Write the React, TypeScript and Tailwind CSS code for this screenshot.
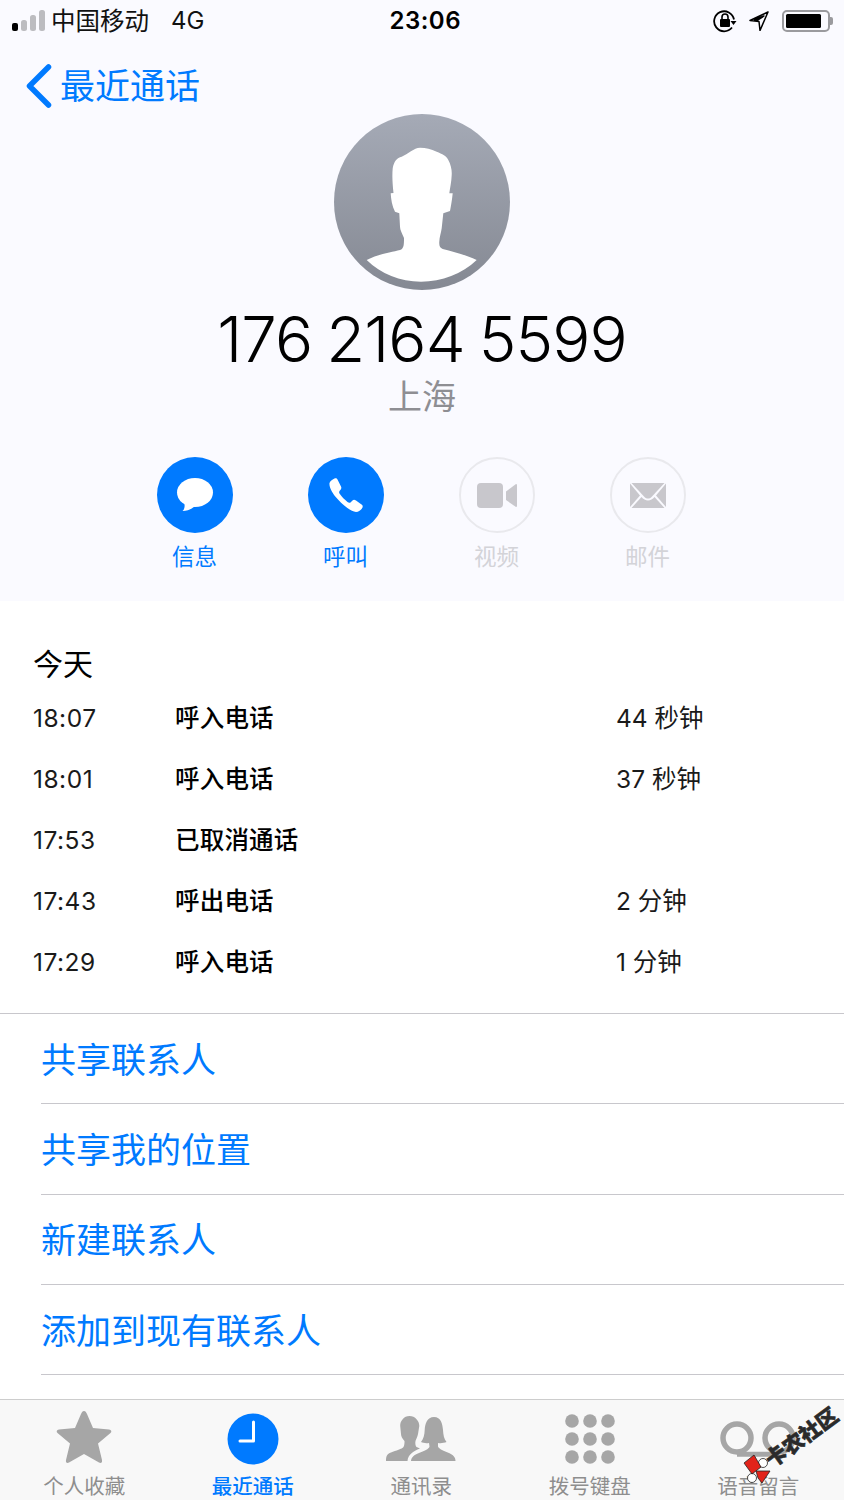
import React from "react";

const cjk = '"Inter","Noto Sans CJK SC",sans-serif';

function Signal() {
  return (
    <svg width="34" height="22" viewBox="0 0 34 22">
      <rect x="0" y="14" width="6" height="8" rx="2" fill="#000" transform="translate(0 -1)" />
      <rect x="9" y="10" width="6" height="11" rx="2.5" fill="#bcbcc0" />
      <rect x="18" y="5" width="6" height="16" rx="2.5" fill="#bcbcc0" />
      <rect x="27" y="0" width="6" height="21" rx="2.5" fill="#bcbcc0" />
    </svg>
  );
}

function Avatar() {
  return (
    <svg width="176" height="176" viewBox="0 0 176 176" className="block">
      <defs>
        <linearGradient id="av" x1="0" y1="0" x2="0" y2="1">
          <stop offset="0" stopColor="#a5aab6" />
          <stop offset="1" stopColor="#858993" />
        </linearGradient>
      </defs>
      <circle cx="88" cy="88" r="88" fill="url(#av)" />
      <path
        d="M32.7 146 C44 140 58 138 66 136 C70 135 70 130 70 124 C68 119 66 116 66 112.7 L65.3 99.3 L61 97.7 C58 92 57 85 56.7 79.3 L59.5 79 C58.5 70 58 62 58.7 54.3 C60 47 63 44 67.7 42.7 C74 40 80 33.7 86 33.7 C92 33.7 97 35 102.7 37.7 C108 40 113 42 114.3 46 C117 51 118 56 117.7 61 C117.5 68 116 74 115.3 79.3 L118.7 79.3 C118 86 117 92 116 97 L109.3 99.3 L107.7 114.3 C107 119 105.5 123 105.3 127.7 C105 132 106 134 108.7 135 C120 138 132 141 142.7 146 C128 160 108 167.7 87 167.7 C66 167.7 47 160 32.7 146 Z"
        fill="#fff"
      />
    </svg>
  );
}

function Action({ label, on, children }: { label: string; on?: boolean; children: React.ReactNode }) {
  return (
    <div className="w-[151px] flex flex-col items-center">
      <div
        className={
          on
            ? "w-[76px] h-[76px] rounded-full bg-[#007aff] flex items-center justify-center"
            : "w-[76px] h-[76px] rounded-full border-2 border-[#e9e9ed] flex items-center justify-center"
        }
      >
        {children}
      </div>
      <div className={on ? "mt-[11px] text-[22.5px] leading-[26px] text-[#007aff]" : "mt-[11px] text-[22.5px] leading-[26px] text-[#d3d3d8]"}>
        {label}
      </div>
    </div>
  );
}

const calls = [
  ["18:07", "呼入电话", "44 秒钟"],
  ["18:01", "呼入电话", "37 秒钟"],
  ["17:53", "已取消通话", ""],
  ["17:43", "呼出电话", "2 分钟"],
  ["17:29", "呼入电话", "1 分钟"],
];

const links = ["共享联系人", "共享我的位置", "新建联系人", "添加到现有联系人"];

function Tab({ label, on, children }: { label: string; on?: boolean; children: React.ReactNode }) {
  return (
    <div className="w-[168.5px] flex flex-col items-center">
      <div className="h-[62px] flex items-center justify-center">{children}</div>
      <div className={on ? "mt-[5px] text-[20.5px] leading-[24px] whitespace-nowrap text-[#007aff] font-medium" : "mt-[5px] text-[20.5px] leading-[24px] whitespace-nowrap text-[#8e8e8e]"}>
        {label}
      </div>
    </div>
  );
}

export default function App() {
  return (
    <div className="w-[844px] h-[1500px] overflow-hidden bg-white flex flex-col relative" style={{ fontFamily: cjk }}>
      <div className="h-[601px] shrink-0 bg-[#fafaff] flex flex-col">
        <div className="h-[42px] shrink-0 flex items-center pl-[12px] pr-[11px] text-black relative">
          <Signal />
          <span className="ml-[5px] text-[24.5px] leading-[30px] text-[#111]">中国移动</span>
          <span className="ml-[22px] text-[24px] leading-[30px] text-[#111]">4G</span>
          <span className="ml-[185px] text-[24px] leading-[30px] font-semibold tracking-[0.5px]">23:06</span>
          <div className="ml-auto flex items-center">
            <svg width="24" height="24" viewBox="0 0 24 24" fill="none">
              <path d="M21 10.5 A10 10 0 1 0 19 18.5" stroke="#000" strokeWidth="1.8" />
              <path d="M17.5 12 L23.5 12 L20.5 16 Z" fill="#000" />
              <rect x="7" y="10" width="10" height="8" rx="1" fill="#000" />
              <path d="M9 10 V8 a3 3 0 0 1 6 0 V10" stroke="#000" strokeWidth="1.6" />
            </svg>
            <svg className="ml-[12px]" width="20" height="20" viewBox="0 0 20 20" fill="none">
              <path d="M19 1 L1 9.5 L10 10.5 L11 19.5 Z M15 5 L9 9 L5.5 8.8 Z" stroke="#000" strokeWidth="1.5" strokeLinejoin="round" fill="none" />
            </svg>
            <div className="ml-[13px] w-[48px] h-[22px] rounded-[5px] border-2 border-[#9a9a9e] p-[2px]">
              <div className="w-[35px] h-full bg-black rounded-[1.5px]" />
            </div>
            <div className="w-[3px] h-[8px] bg-[#9a9a9e] rounded-r-[2px]" />
          </div>
        </div>

        <div className="h-[72px] shrink-0 flex items-center pl-[26px] pt-[15px]">
          <svg width="26" height="44" viewBox="0 0 26 44" fill="none">
            <path d="M22.5 3 L3.5 22 L22.5 41" stroke="#007aff" strokeWidth="5.5" strokeLinecap="round" strokeLinejoin="round" />
          </svg>
          <span className="ml-[8px] text-[35px] leading-[44px] text-[#007aff]">最近通话</span>
        </div>

        <div className="flex justify-center shrink-0">
          <Avatar />
        </div>

        <div className="mt-[13px] text-center text-[63.5px] leading-[72px] font-[350] text-black tracking-[-0.9px] [word-spacing:-3px]">176 2164 5599</div>
        <div className="mt-[1px] text-center text-[34px] leading-[42px] text-[#8e8e93]">上海</div>

        <div className="mt-[39px] pl-[119px] flex">
          <Action label="信息" on>
            <svg width="38" height="35" viewBox="0 0 38 35">
              <ellipse cx="19" cy="14.5" rx="18" ry="14.5" fill="#fff" />
              <path d="M8 23 C9 27 9 31 6.5 33 C12 33 16 31 20 27 Z" fill="#fff" />
            </svg>
          </Action>
          <Action label="呼叫" on>
            <svg width="34" height="35" viewBox="0 0 34 35">
              <path
                d="M5.5 0.5 C4 1 1 3 0.5 5 C0 9 3 15 9 21.5 C15 28 22 33.5 27 34 C29.5 34 32.5 32 33.5 29.5 C34 28 33.5 27 32.5 26.5 L27 22.5 C25.5 21.5 24.5 21.5 23.5 22.5 L21.5 24.5 C20.5 25 19.5 24.8 18.5 24 C15.5 21.5 13 19 10.5 15.5 C10 14.5 10 13.5 10.7 12.8 L11.8 11.5 C12.5 10.5 12.5 9.5 12 8.5 L8.5 1.5 C8 0.5 6.8 0 5.5 0.5 Z"
                fill="#fff"
              />
            </svg>
          </Action>
          <Action label="视频">
            <svg width="40" height="25" viewBox="0 0 40 25">
              <rect x="0" y="0" width="26" height="25" rx="4" fill="#c8c7cc" />
              <path d="M29 8.5 L39 1 Q40 1 40 2 V23 Q40 24 39 24 L29 17 Z" fill="#c8c7cc" />
            </svg>
          </Action>
          <Action label="邮件">
            <svg width="36" height="25" viewBox="0 0 36 25">
              <path d="M0 0.5 L0 24 L10 12.5 Z" fill="#c8c7cc" />
              <path d="M36 0.5 L36 24 L26 12.5 Z" fill="#c8c7cc" />
              <path d="M1.5 0 H34.5 L21.5 14 C19.5 16 16.5 16 14.5 14 Z" fill="#c8c7cc" />
              <path d="M11.5 14 C15 18.5 21 18.5 24.5 14 L34.5 25 H1.5 Z" fill="#c8c7cc" />
            </svg>
          </Action>
        </div>
      </div>

      <div className="h-[412px] shrink-0 pl-[33px] border-b border-[#c8c7cc] box-content">
        <div className="pt-[43px] h-[90px] text-[30px] leading-[40px] text-black">今天</div>
        <div className="flex flex-col">
          {calls.map((c) => (
            <div key={c[0]} className="h-[61px] flex items-center text-black -mt-[4px] mb-[4px]">
              <span className="w-[143px] text-[24.5px] leading-[30px] tracking-[0.5px] text-[#1a1a1a]">{c[0]}</span>
              <span className="w-[441px] text-[24.5px] leading-[30px] tracking-[0.2px] font-medium -ml-[1px]">{c[1]}</span>
              <span className="text-[24.5px] leading-[30px] text-[#1a1a1a]">{c[2]}</span>
            </div>
          ))}
        </div>
      </div>

      <div className="pl-[41px] flex-1 flex flex-col">
        {links.map((l) => (
          <div key={l} className="h-[90.33px] shrink-0 flex items-center pt-[2px] border-b border-[#c8c7cc] text-[35px] leading-[44px] text-[#007aff]">
            {l}
          </div>
        ))}
      </div>

      <div className="h-[101px] shrink-0 bg-[#f8f8f8] border-t border-[#cdcdcd] flex pt-[8px]">
        <Tab label="个人收藏">
          <svg className="-mt-[4px]" width="56" height="54" viewBox="0 0 56 54">
            <path d="M28 1 C29.5 1 30 2 31 4 L37 18 L53 19.5 C55.5 20 56 21.5 54.5 23 L42 33.5 L46 50 C46.5 52.5 45 53.5 43 52.5 L28 44 L13 52.5 C11 53.5 9.5 52.5 10 50 L14 33.5 L1.5 23 C0 21.5 0.5 20 3 19.5 L19 18 L25 4 C26 2 26.5 1 28 1 Z" fill="#a6a6a6" />
          </svg>
        </Tab>
        <Tab label="最近通话" on>
          <svg width="52" height="52" viewBox="0 0 52 52">
            <circle cx="26" cy="26" r="25.5" fill="#007aff" />
            <path d="M26.5 9 V28 H13" stroke="#fff" strokeWidth="3" strokeLinecap="round" strokeLinejoin="round" fill="none" />
          </svg>
        </Tab>
        <Tab label="通讯录">
          <svg width="70" height="48" viewBox="0 0 70 48">
            <path d="M0 46 C0 41 1 39 5 37.5 C10 35.5 16 34 17.5 32 C18.5 30 18.5 28 18.5 26 C16 23 15 21 15 19 L14.2 11 C14 6 18 1 23.5 1 C29 1 33.5 6 33.3 11 L32 19 C31.5 22 30 24 29.5 26 C29 28 29.5 31 30.5 32 L34 33.5 C27 36 22 40 21.5 46 Z" fill="#a6a6a6" />
            <path d="M25 46 C25.5 42 28 40 33 38 C38 36 43 34 43.5 31.5 L43 28 C40 28.5 37 28 35 27 C37.5 24 38.5 20 38.7 15 C39 9 41 2 48 2 C55 2 56.5 9 57 15 C57.3 20 58 24 60.5 27 C58 28 55 28.5 52 28 L52 31.5 C53 34 58 36 63 38 C67 40 69.5 42 69.5 46 Z" fill="#a6a6a6" />
          </svg>
        </Tab>
        <Tab label="拨号键盘">
          <svg width="50" height="50" viewBox="0 0 50 50" fill="#a6a6a6">
            {[7, 25, 43].flatMap((y) => [7, 25, 43].map((x) => <circle key={`${x}-${y}`} cx={x} cy={y} r="6.8" />))}
          </svg>
        </Tab>
        <Tab label="语音留言">
          <svg width="76" height="36" viewBox="0 0 76 36" fill="none">
            <circle cx="17" cy="17" r="14" stroke="#a6a6a6" strokeWidth="5.5" />
            <circle cx="59" cy="17" r="14" stroke="#a6a6a6" strokeWidth="5.5" />
            <path d="M17 33.2 H59" stroke="#a6a6a6" strokeWidth="5" />
          </svg>
        </Tab>
      </div>

      <div
        className="absolute left-[757px] top-[1425px] w-[90px] text-center text-[21px] leading-[26px] font-black text-[#2a2a2a] -rotate-[36deg] whitespace-nowrap"
        style={{ WebkitTextStroke: "0.6px #2a2a2a" }}
      >
        卡农社区
      </div>
      <div className="absolute left-[740px] top-[1450px] w-[32px] h-[34px]">
        <svg width="32" height="34" viewBox="0 0 32 34">
          <circle cx="23" cy="13" r="4.5" fill="#fff" stroke="#222" strokeWidth="0.8" />
          <circle cx="12" cy="28" r="4.5" fill="#fff" stroke="#222" strokeWidth="0.8" />
          <path d="M4 13 L14 5 L21 17 L12 24 Z" fill="#e2231a" stroke="#222" strokeWidth="0.8" />
          <path d="M16 21 L30 21 L22 33 L18 28 Z" fill="#e2231a" stroke="#222" strokeWidth="0.8" />
        </svg>
      </div>
    </div>
  );
}
